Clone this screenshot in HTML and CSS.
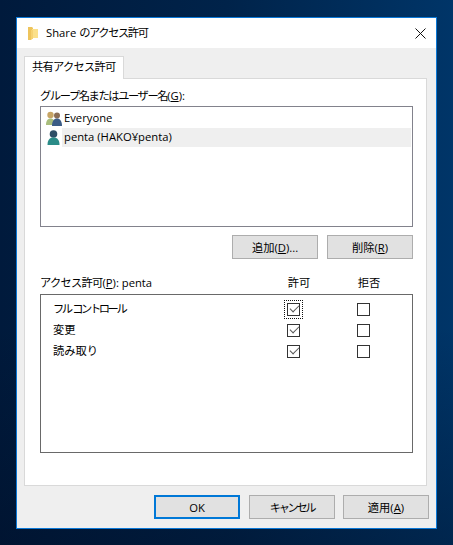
FILE: index.html
```html
<!DOCTYPE html>
<html lang="ja">
<head>
    <meta charset="UTF-8">
    <title>Share のアクセス許可</title>
    <link rel="stylesheet" href="styles.css">
</head>
<body>
    <div class="dialog">
        <div class="titlebar">
            <svg class="folder-icon" width="10" height="13" viewBox="0 0 10 13">
                <path d="M0 0h4l1 1v10l-2 2H0z" fill="#eec45c"/>
                <path d="M4 2h6v9H4z" fill="#fbe08a"/>
                <path d="M3 3h2v9H3z" fill="#f6d272"/>
            </svg>
            <span class="title">Share <span class="tighter">のアクセス許可</span></span>
            <svg class="close-icon" width="11" height="11" viewBox="0 0 11 11">
                <path d="M.5.5l10 10M10.500.5l-10 10" stroke="#111" stroke-width="1" fill="none"/>
            </svg>
        </div>

        <div class="body">
            <div class="tab"><span class="tight">共有アクセス許可</span></div>
            <div class="panel">
                <div class="label"><span class="tighter">グループ名またはユーザー名</span>(<u>G</u>):</div>
                <div class="listbox">
                    <div class="list-row">
                        <svg class="user-icon" width="16" height="16" viewBox="0 0 16 16">
                            <circle cx="4.500" cy="4" r="3.200" fill="#c7a565"/>
                            <path d="M0 14c0-4 1.500-6.500 4.500-6.500S9 10 9 14z" fill="#a8bd7c"/>
                            <circle cx="11" cy="4.500" r="3" fill="#8a6d55"/>
                            <path d="M6 15c0-5 2-7.500 5-7.500s5 2.500 5 7.500z" fill="#3b5c86"/>
                        </svg>
                        <span class="list-text">Everyone</span>
                    </div>
                    <div class="list-row">
                        <svg class="user-icon" width="16" height="16" viewBox="0 0 16 16">
                            <circle cx="7.500" cy="4" r="3.800" fill="#2f4f66"/>
                            <path d="M1.500 15c0-5 2-7.500 6-7.500s6 2.500 6 7.500z" fill="#2b8c88"/>
                        </svg>
                        <span class="list-text selected">penta (HAKO¥penta)</span>
                    </div>
                </div>

                <div class="actions">
                    <button class="btn">追加(<u>D</u>)...</button>
                    <button class="btn">削除(<u>R</u>)</button>
                </div>

                <div class="perm-head">
                    <div class="perm-name"><span class="tight">アクセス許可</span>(<u>P</u>): penta</div>
                    <div class="perm-col">許可</div>
                    <div class="perm-col">拒否</div>
                </div>
                <div class="perm-box">
                    <div class="perm-row">
                        <div class="perm-name"><span class="tightest">フル コントロール</span></div>
                        <div class="perm-col"><span class="check-focus"><span class="check on"></span></span></div>
                        <div class="perm-col"><span class="check"></span></div>
                    </div>
                    <div class="perm-row">
                        <div class="perm-name">変更</div>
                        <div class="perm-col"><span class="check on"></span></div>
                        <div class="perm-col"><span class="check"></span></div>
                    </div>
                    <div class="perm-row">
                        <div class="perm-name">読み取り</div>
                        <div class="perm-col"><span class="check on"></span></div>
                        <div class="perm-col"><span class="check"></span></div>
                    </div>
                </div>
            </div>

            <div class="footer">
                <button class="btn default">OK</button>
                <button class="btn"><span class="tightest">キャンセル</span></button>
                <button class="btn apply">適用(<u>A</u>)</button>
            </div>
        </div>
    </div>
</body>
</html>
```

FILE: styles.css
```css
* {
    margin: 0;
    padding: 0;
    box-sizing: border-box;
}

html, body {
    height: 100%;
}

body {
    padding: 17px 16px 0;
    overflow: hidden;
    background: linear-gradient(180deg, rgba(0, 10, 30, 0) 60%, rgba(0, 10, 30, 0.35) 100%),
        linear-gradient(90deg, #001a3c 0%, #00234a 50%, #003568 100%);
    font-family: "Open Sans", "Noto Sans CJK JP", sans-serif;
    font-size: 11.25px;
    color: #000;
}

.tight {
    letter-spacing: -0.75px;
}

.tighter {
    letter-spacing: -1.4px;
}

.tightest {
    letter-spacing: -2.4px;
    word-spacing: 1px;
}

.dialog {
    width: 421px;
    height: 512px;
    border: 1px solid #0a78d7;
    background: #efefef;
    display: flex;
    flex-direction: column;
}

.titlebar {
    height: 30px;
    flex: none;
    background: #fff;
    display: flex;
    align-items: center;
    padding: 0 10px 0 11px;
}

.title {
    margin-left: 8px;
    margin-bottom: 2px;
    flex: 1;
}

.body {
    flex: 1;
    padding: 8px 7px 0;
}

.tab {
    width: 100px;
    height: 23px;
    background: #fff;
    border: 1px solid #d9d9d9;
    border-bottom: none;
    padding-left: 7px;
    line-height: 19px;
    position: relative;
    z-index: 1;
}

.panel {
    width: 403px;
    height: 408px;
    margin-top: -1px;
    background: #fff;
    border: 1px solid #d9d9d9;
    padding: 8px 13px 0 15px;
}

.label {
    height: 19px;
    line-height: 17px;
}

.listbox {
    height: 121px;
    border: 1px solid #82828c;
    padding: 2px 1px 0 5px;
}

.list-row {
    height: 19px;
    display: flex;
    align-items: center;
}

.user-icon {
    flex: none;
}

.list-text {
    flex: 1;
    height: 19px;
    line-height: 17px;
    padding-left: 2px;
}

.selected {
    background: #efefef;
}

.actions {
    display: flex;
    justify-content: flex-end;
    gap: 9px;
    margin-top: 8px;
}

.btn {
    width: 86px;
    height: 24px;
    background: #e1e1e1;
    border: 1px solid #adadad;
    font: inherit;
    color: inherit;
}

.btn.default {
    border: 2px solid #0078d7;
}

.perm-head {
    display: grid;
    grid-template-columns: 224px 70px 70px;
    height: 35px;
    padding: 15px 0 0;
    line-height: 18px;
}

.perm-box {
    height: 159px;
    border: 1px solid #696969;
    padding-top: 4px;
}

.perm-row {
    display: grid;
    grid-template-columns: 205px 70px 70px;
    height: 21px;
    align-items: center;
    padding-left: 12px;
}

.perm-row .perm-name {
    line-height: 18px;
    padding-bottom: 2px;
}

.perm-col {
    text-align: center;
}

.perm-row .perm-col {
    display: flex;
    justify-content: center;
    align-items: center;
}

.check-focus {
    display: flex;
    padding: 2px;
    margin: -3px;
    border: 1px dotted #111;
}

.check {
    display: block;
    width: 13px;
    height: 13px;
    border: 1px solid #333;
    background: #fff;
    position: relative;
}

.check.on::after {
    content: "";
    position: absolute;
    left: 2px;
    top: 1px;
    width: 8px;
    height: 4px;
    border-left: 1px solid #555;
    border-bottom: 1px solid #555;
    transform: rotate(-45deg);
}

.footer {
    display: flex;
    justify-content: flex-end;
    gap: 9px;
    margin-top: 9px;
}

.btn.apply {
    margin-left: -1px;
}
```
